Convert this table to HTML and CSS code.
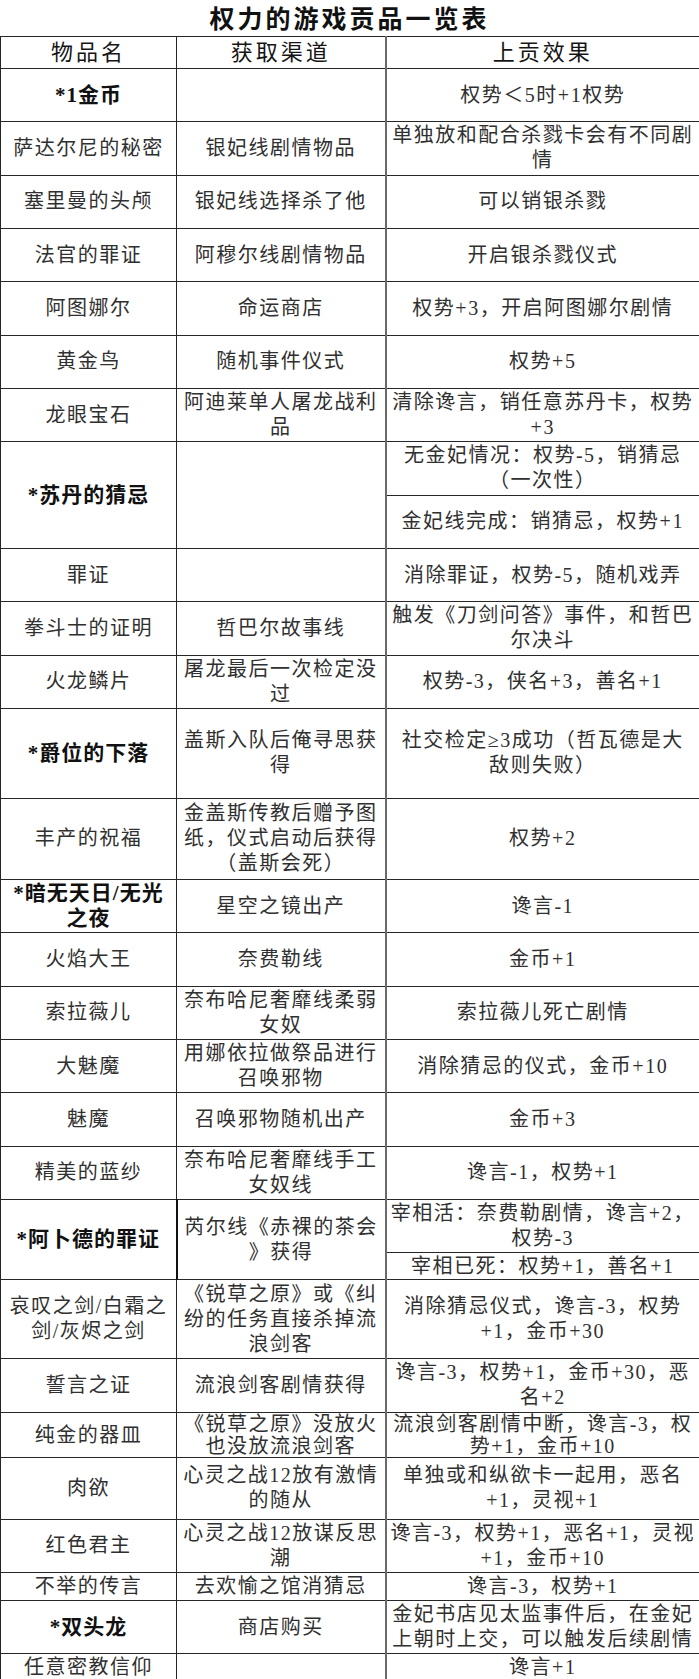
FILE: index.html
```html
<!DOCTYPE html>
<html lang="zh-CN">
<head>
<meta charset="utf-8">
<title>权力的游戏贡品一览表</title>
<link rel="stylesheet" href="styles.css">
</head>
<body>
<div class="page">
  <h1 class="title">权力的游戏贡品一览表</h1>
  <table class="sheet">
    <colgroup><col class="c1"><col class="c2"><col class="c3"></colgroup>
    <tr class="hdr"><th>物品名</th><th>获取渠道</th><th class="sep">上贡效果</th></tr>
    <tr class="std"><td class="b">*1金币</td><td></td><td class="sep">权势＜5时+1权势</td></tr>
    <tr class="std"><td>萨达尔尼的秘密</td><td>银妃线剧情物品</td><td class="sep">单独放和配合杀戮卡会有不同剧<br>情</td></tr>
    <tr class="std"><td>塞里曼的头颅</td><td>银妃线选择杀了他</td><td class="sep">可以销银杀戮</td></tr>
    <tr class="std"><td>法官的罪证</td><td>阿穆尔线剧情物品</td><td class="sep">开启银杀戮仪式</td></tr>
    <tr class="std"><td>阿图娜尔</td><td>命运商店</td><td class="sep">权势+3，开启阿图娜尔剧情</td></tr>
    <tr class="std"><td>黄金鸟</td><td>随机事件仪式</td><td class="sep">权势+5</td></tr>
    <tr class="std"><td>龙眼宝石</td><td>阿迪莱单人屠龙战利<br>品</td><td class="sep">清除谗言，销任意苏丹卡，权势<br>+3</td></tr>
    <tr class="std"><td class="b" rowspan="2">*苏丹的猜忌</td><td rowspan="2"></td><td class="sep">无金妃情况：权势-5，销猜忌<br>（一次性）</td></tr>
    <tr class="std"><td class="sep">金妃线完成：销猜忌，权势+1</td></tr>
    <tr class="std"><td>罪证</td><td></td><td class="sep">消除罪证，权势-5，随机戏弄</td></tr>
    <tr class="std"><td>拳斗士的证明</td><td>哲巴尔故事线</td><td class="sep">触发《刀剑问答》事件，和哲巴<br>尔决斗</td></tr>
    <tr class="std"><td>火龙鳞片</td><td>屠龙最后一次检定没<br>过</td><td class="sep">权势-3，侠名+3，善名+1</td></tr>
    <tr class="r90"><td class="b">*爵位的下落</td><td>盖斯入队后俺寻思获<br>得</td><td class="sep">社交检定≥3成功（哲瓦德是大<br>敌则失败）</td></tr>
    <tr class="r81"><td>丰产的祝福</td><td>金盖斯传教后赠予图<br>纸，仪式启动后获得<br>（盖斯会死）</td><td class="sep">权势+2</td></tr>
    <tr class="std"><td class="b">*暗无天日/无光<br>之夜</td><td>星空之镜出产</td><td class="sep">谗言-1</td></tr>
    <tr class="std"><td>火焰大王</td><td>奈费勒线</td><td class="sep">金币+1</td></tr>
    <tr class="std"><td>索拉薇儿</td><td>奈布哈尼奢靡线柔弱<br>女奴</td><td class="sep">索拉薇儿死亡剧情</td></tr>
    <tr class="std"><td>大魅魔</td><td>用娜依拉做祭品进行<br>召唤邪物</td><td class="sep">消除猜忌的仪式，金币+10</td></tr>
    <tr class="std"><td>魅魔</td><td>召唤邪物随机出产</td><td class="sep">金币+3</td></tr>
    <tr class="std"><td>精美的蓝纱</td><td>奈布哈尼奢靡线手工<br>女奴线</td><td class="sep">谗言-1，权势+1</td></tr>
    <tr class="std"><td class="b thick" rowspan="2">*阿卜德的罪证</td><td rowspan="2">芮尔线《赤裸的茶会<br>》获得</td><td class="sep">宰相活：奈费勒剧情，谗言+2，<br>权势-3</td></tr>
    <tr class="r27"><td class="sep">宰相已死：权势+1，善名+1</td></tr>
    <tr class="r79"><td>哀叹之剑/白霜之<br>剑/灰烬之剑</td><td>《锐草之原》或《纠<br>纷的任务直接杀掉流<br>浪剑客</td><td class="sep">消除猜忌仪式，谗言-3，权势<br>+1，金币+30</td></tr>
    <tr class="std"><td>誓言之证</td><td>流浪剑客剧情获得</td><td class="sep">谗言-3，权势+1，金币+30，恶<br>名+2</td></tr>
    <tr class="r44 tight"><td>纯金的器皿</td><td>《锐草之原》没放火<br>也没放流浪剑客</td><td class="sep">流浪剑客剧情中断，谗言-3，权<br>势+1，金币+10</td></tr>
    <tr class="r62"><td>肉欲</td><td>心灵之战12放有激情<br>的随从</td><td class="sep">单独或和纵欲卡一起用，恶名<br>+1，灵视+1</td></tr>
    <tr class="std"><td>红色君主</td><td>心灵之战12放谋反思<br>潮</td><td class="sep">谗言-3，权势+1，恶名+1，灵视<br>+1，金币+10</td></tr>
    <tr class="r28"><td>不举的传言</td><td>去欢愉之馆消猜忌</td><td class="sep">谗言-3，权势+1</td></tr>
    <tr class="std"><td class="b">*双头龙</td><td>商店购买</td><td class="sep">金妃书店见太监事件后，在金妃<br>上朝时上交，可以触发后续剧情</td></tr>
    <tr class="r28"><td>任意密教信仰</td><td></td><td class="sep">谗言+1</td></tr>
  </table>
</div>
</body>
</html>
```

FILE: styles.css
```css
html, body {
  margin: 0;
  padding: 0;
  background: #ffffff;
}

body {
  font-family: "Liberation Serif", "Noto Sans CJK SC", serif;
  color: #303030;
}

.page {
  width: 699px;
  overflow: hidden;
}

.title {
  margin: 0;
  height: 36px;
  line-height: 38px;
  font-family: "Liberation Sans", "Noto Sans CJK SC", sans-serif;
  font-size: 25px;
  font-weight: 700;
  letter-spacing: 3px;
  text-align: center;
  color: #111111;
}

.sheet {
  width: 699px;
  table-layout: fixed;
  border-collapse: collapse;
}

.c1 { width: 176px; }
.c2 { width: 209px; }
.c3 { width: 314px; }

.sheet th,
.sheet td {
  border: 1px solid #262626;
  padding: 0 1px;
  text-align: center;
  vertical-align: middle;
  white-space: nowrap;
  font-size: 20px;
  letter-spacing: 1.5px;
  line-height: 25px;
  font-weight: 400;
}

.sheet th {
  font-family: "Liberation Sans", "Noto Sans CJK SC", sans-serif;
  font-size: 22px;
  letter-spacing: 3px;
  line-height: 28px;
  color: #151515;
}

.sheet .sep {
  border-left: 2px solid #6a6a6a;
}

.sheet td.b {
  font-weight: 700;
  font-size: 21px;
  letter-spacing: 1px;
  color: #111111;
}

.sheet td.thick {
  border-right: 2px solid #111111;
}

.hdr { height: 32px; }
.std { height: 53.33px; }
.r27 { height: 27px; }
.r28 { height: 28px; }
.r44 { height: 44px; }
.r62 { height: 62px; }
.r79 { height: 79px; }
.r81 { height: 81px; }
.r90 { height: 90px; }

.tight td { line-height: 22px; }
```
